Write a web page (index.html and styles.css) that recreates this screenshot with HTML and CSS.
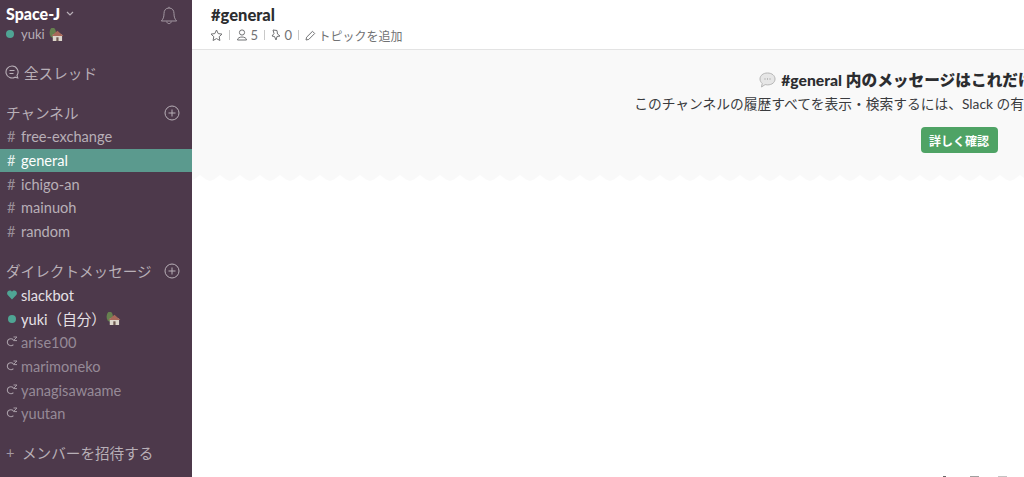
FILE: index.html
```html
<!DOCTYPE html>
<html lang="ja">
<head>
  <meta charset="UTF-8">
  <title>#general - Space-J</title>
  <link rel="stylesheet" href="styles.css">
</head>
<body>
  <svg class="defs" width="0" height="0">
    <symbol id="home" viewBox="0 0 16 14">
      <ellipse cx="4" cy="5" rx="3.4" ry="5.500" fill="#66804f"/>
      <path d="M4 14h10V7H4z" fill="#ddd6cc"/>
      <path d="M2.500 8.500L9 3l6.500 5.500z" fill="#a8695a"/>
      <path d="M7.800 14v-4h2.400v4z" fill="#6f5a52"/>
    </symbol>
    <symbol id="zzz" viewBox="0 0 12 11">
      <path d="M7.400 3.800A3.500 3.500 0 1 0 7.400 8.600" fill="none" stroke="currentColor" stroke-width="1.100"/>
      <path d="M7.500 1h3.500L7.500 4.600H11" fill="none" stroke="currentColor" stroke-width="1"/>
    </symbol>
    <symbol id="plus" viewBox="0 0 16 16">
      <circle cx="8" cy="8" r="7" fill="none" stroke="currentColor" stroke-width="1"/>
      <path d="M8 4.500v7M4.500 8h7" stroke="currentColor" stroke-width="1"/>
    </symbol>
    <pattern id="teeth" x="-2" width="20" height="6" patternUnits="userSpaceOnUse">
      <path d="M0 0h20v6l-4-1.500L10 0 4 4.500 0 6z" fill="#f9f9f9"/>
    </pattern>
  </svg>

  <aside class="sidebar">
    <header class="team">
      <div class="team-info">
        <div class="team-name">Space-J
          <svg class="caret" width="8" height="6" viewBox="0 0 8 6"><path d="M1 1l3 3 3-3" fill="none" stroke="currentColor" stroke-width="1.200"/></svg>
        </div>
        <div class="team-user"><span class="dot"></span>yuki <svg class="emoji" width="15" height="13"><use href="#home"/></svg></div>
      </div>
      <svg class="bell" width="18" height="20" viewBox="0 0 18 20"><path d="M9 2c-3.500 0-5 2.600-5 5.500 0 3.500-.8 5.500-2.600 7.500h15.200c-1.800-2-2.600-4-2.600-7.500C14 4.600 12.500 2 9 2zM9 2V.8M6.800 15.500c0 2.800 4.400 2.800 4.400 0" fill="none" stroke="currentColor" stroke-width="1"/></svg>
    </header>

    <div class="threads">
      <svg width="14" height="14" viewBox="0 0 14 14"><path d="M7 1a6 6 0 1 0 3 11.200l2.800.8-.8-2.600A6 6 0 0 0 7 1zM4.500 5.500h5M4.500 8.500h4" fill="none" stroke="currentColor" stroke-width="1.100"/></svg>
      全スレッド
    </div>

    <section class="group channels">
      <h3 class="group-title">チャンネル <svg width="16" height="16"><use href="#plus"/></svg></h3>
      <ul class="list">
        <li class="row"><span class="hash">#</span>free-exchange</li>
        <li class="row active"><span class="hash">#</span>general</li>
        <li class="row"><span class="hash">#</span>ichigo-an</li>
        <li class="row"><span class="hash">#</span>mainuoh</li>
        <li class="row"><span class="hash">#</span>random</li>
      </ul>
    </section>

    <section class="group dms">
      <h3 class="group-title">ダイレクトメッセージ <svg width="16" height="16"><use href="#plus"/></svg></h3>
      <ul class="list">
        <li class="row online">
          <svg class="status" width="11" height="10" viewBox="0 0 11 10"><path d="M5.500 10L.8 5C-1 2.500 1 0 3 0c1.200 0 2 .6 2.500 1.400C6 .6 6.800 0 8 0c2 0 4 2.500 2.200 5z" fill="#4fa594"/></svg>slackbot
        </li>
        <li class="row online"><span class="status dot"></span>yuki（自分）<svg class="emoji" width="15" height="13"><use href="#home"/></svg></li>
        <li class="row away"><svg class="status" width="12" height="11"><use href="#zzz"/></svg>arise100</li>
        <li class="row away"><svg class="status" width="12" height="11"><use href="#zzz"/></svg>marimoneko</li>
        <li class="row away"><svg class="status" width="12" height="11"><use href="#zzz"/></svg>yanagisawaame</li>
        <li class="row away"><svg class="status" width="12" height="11"><use href="#zzz"/></svg>yuutan</li>
      </ul>
    </section>

    <div class="invite"><span class="invite-plus">+</span>メンバーを招待する</div>
  </aside>

  <main class="main">
    <header class="channel-header">
      <h1 class="channel-name">#general</h1>
      <div class="channel-meta">
        <svg class="star" width="13" height="13" viewBox="0 0 13 13"><path d="M6.500 1l1.700 3.600 3.800.5-2.800 2.600.7 3.800-3.400-1.900-3.400 1.900.7-3.800L1 5.100l3.800-.5z" fill="none" stroke="currentColor"/></svg>
        <span class="sep"></span>
        <svg width="12" height="12" viewBox="0 0 12 12"><circle cx="6" cy="3.500" r="2.600" fill="none" stroke="currentColor"/><path d="M1.500 11c0-4 9-4 9 0z" fill="none" stroke="currentColor"/></svg>
        <span class="count">5</span>
        <span class="sep"></span>
        <svg width="11" height="12" viewBox="0 0 11 12"><path d="M2 1l4 .5.500 3.500 2.500 2-3 .5-1 3.500-1.500-3.500-2.500-.5 2-2.500z" fill="none" stroke="currentColor"/></svg>
        <span class="count">0</span>
        <span class="sep"></span>
        <svg width="11" height="11" viewBox="0 0 11 11"><path d="M1 10l.6-2.800L7.500 1.300l2.200 2.200L3.800 9.400z" fill="none" stroke="currentColor"/></svg>
        <span class="topic">トピックを追加</span>
      </div>
    </header>

    <section class="limit-banner">
      <h2 class="limit-title">
        <svg width="17" height="16" viewBox="0 0 17 16"><path d="M8.500 1C4 1 1 3.600 1 7c0 1.800.9 3.300 2.200 4.400L2.500 15l3.600-2.400c.8.200 1.600.3 2.400.3 4.500 0 7.500-2.500 7.500-5.900S13 1 8.500 1z" fill="#e6e6e6" stroke="#b5b5b5"/><path d="M5.500 7h1M8 7h1M10.500 7h1" stroke="#8f8f8f"/></svg>
        #general 内のメッセージはこれだけではありません。
      </h2>
      <p class="limit-text">このチャンネルの履歴すべてを表示・検索するには、Slack の有料プランへのアップグレードが必要です。</p>
      <button class="limit-btn">詳しく確認</button>
    </section>
    <svg class="zigzag" width="832" height="6"><rect width="832" height="6" fill="url(#teeth)"/></svg>

    <div class="peek">
      <span class="peek-mark small"></span>
      <span class="peek-mark"></span>
      <span class="peek-mark light"></span>
    </div>
  </main>
</body>
</html>
```

FILE: styles.css
```css
* {
  margin: 0;
  padding: 0;
  box-sizing: border-box;
}

html, body {
  height: 100%;
  overflow: hidden;
}

body {
  display: flex;
  font-family: Lato, 'Noto Sans CJK JP', sans-serif;
  background-color: #ffffff;
  color: #2c2d30;
}

.defs {
  position: absolute;
}

/* sidebar */
.sidebar {
  width: 192px;
  flex-shrink: 0;
  background-color: #4d394b;
  color: #b8afb7;
}

.team {
  display: flex;
  justify-content: space-between;
  padding: 5px 14px 0 6px;
  height: 60px;
}

.team-name {
  display: flex;
  align-items: center;
  gap: 6px;
  font-size: 16px;
  font-weight: 900;
  line-height: 18px;
  color: #ffffff;
}

.caret {
  color: #b8afb7;
}

.team-user {
  display: flex;
  align-items: center;
  font-size: 13px;
  line-height: 20px;
  margin-top: 1px;
}

.team-user .emoji {
  margin-left: 4px;
}

.dot {
  display: inline-block;
  width: 8px;
  height: 8px;
  margin-right: 7px;
  border-radius: 50%;
  background-color: #4fa594;
}

.bell {
  margin-top: 1px;
  color: #a398a2;
}

.threads {
  display: flex;
  align-items: center;
  gap: 5px;
  height: 24px;
  padding-left: 5px;
  font-size: 14.600px;
}

.group {
  margin-top: 17px;
}

.group-title {
  display: flex;
  justify-content: space-between;
  align-items: center;
  height: 23px;
  padding: 0 12px 0 6px;
  font-size: 14.600px;
  font-weight: 400;
}

.list {
  list-style: none;
  margin-top: 1px;
}

.row {
  display: flex;
  align-items: center;
  height: 23.700px;
  padding-left: 7px;
  font-size: 14.600px;
}

.hash {
  width: 14px;
  color: #9a8f99;
}

.row.active {
  background-color: #5b9a8e;
  color: #ffffff;
}

.row.active .hash {
  color: #e3efec;
}

.status {
  width: 10px;
  height: 10px;
  margin-right: 4px;
  flex-shrink: 0;
}

.status.dot {
  width: 8px;
  height: 8px;
  margin-left: 1px;
  margin-right: 5px;
}

.row.online {
  color: #e6e1e6;
}

.row.away {
  color: #968a97;
  padding-left: 6px;
}

.row.away .status {
  width: 12px;
  height: 11px;
  margin-right: 3px;
  margin-bottom: 2px;
  color: #a89da7;
}

.dms {
  margin-top: 16px;
}

.invite {
  display: flex;
  align-items: center;
  height: 24px;
  margin-top: 15px;
  padding-left: 6px;
  font-size: 14.600px;
}

.invite-plus {
  width: 16px;
  color: #a398a2;
}

/* main area */
.main {
  position: relative;
  flex: 1;
  min-width: 0;
  overflow: hidden;
}

.channel-header {
  height: 50px;
  padding: 5px 0 0 19px;
  border-bottom: 1px solid #e3e3e3;
}

.channel-name {
  font-size: 16.500px;
  font-weight: 900;
  line-height: 20px;
  color: #2c2d30;
}

.channel-meta {
  display: flex;
  align-items: center;
  height: 18px;
  margin-top: 1px;
  font-size: 12px;
  color: #717274;
}

.star {
  margin-left: -1px;
}

.count {
  margin-left: 3px;
  font-size: 13px;
}

.sep {
  width: 1px;
  height: 10px;
  margin: 0 5.500px 0 6px;
  background-color: #c9c9c9;
}

.topic {
  margin-left: 3px;
}

.limit-banner {
  width: 1534px;
  height: 125px;
  padding-top: 20px;
  background-color: #f9f9f9;
  text-align: center;
}

.limit-title {
  display: flex;
  justify-content: center;
  align-items: center;
  gap: 5px;
  font-size: 15.700px;
  font-weight: 900;
  line-height: 20px;
  color: #2c2d30;
}

.limit-text {
  margin-top: 4px;
  font-size: 13.750px;
  line-height: 20px;
  color: #3a3b3e;
}

.limit-btn {
  display: block;
  width: 77px;
  height: 26px;
  margin: 13px auto 0;
  border: none;
  border-radius: 4px;
  background-color: #4fa365;
  color: #ffffff;
  font-family: inherit;
  font-size: 12px;
  font-weight: 700;
}

.zigzag {
  display: block;
}

.peek {
  position: absolute;
  right: 17px;
  bottom: 0;
  display: flex;
  align-items: flex-end;
  gap: 19px;
}

.peek-mark {
  width: 9px;
  height: 1px;
  background-color: #a0a0a0;
}

.peek-mark.small {
  width: 3px;
  margin-right: 5px;
  background-color: #666666;
}

.peek-mark.light {
  background-color: #c4c4c4;
}
```
